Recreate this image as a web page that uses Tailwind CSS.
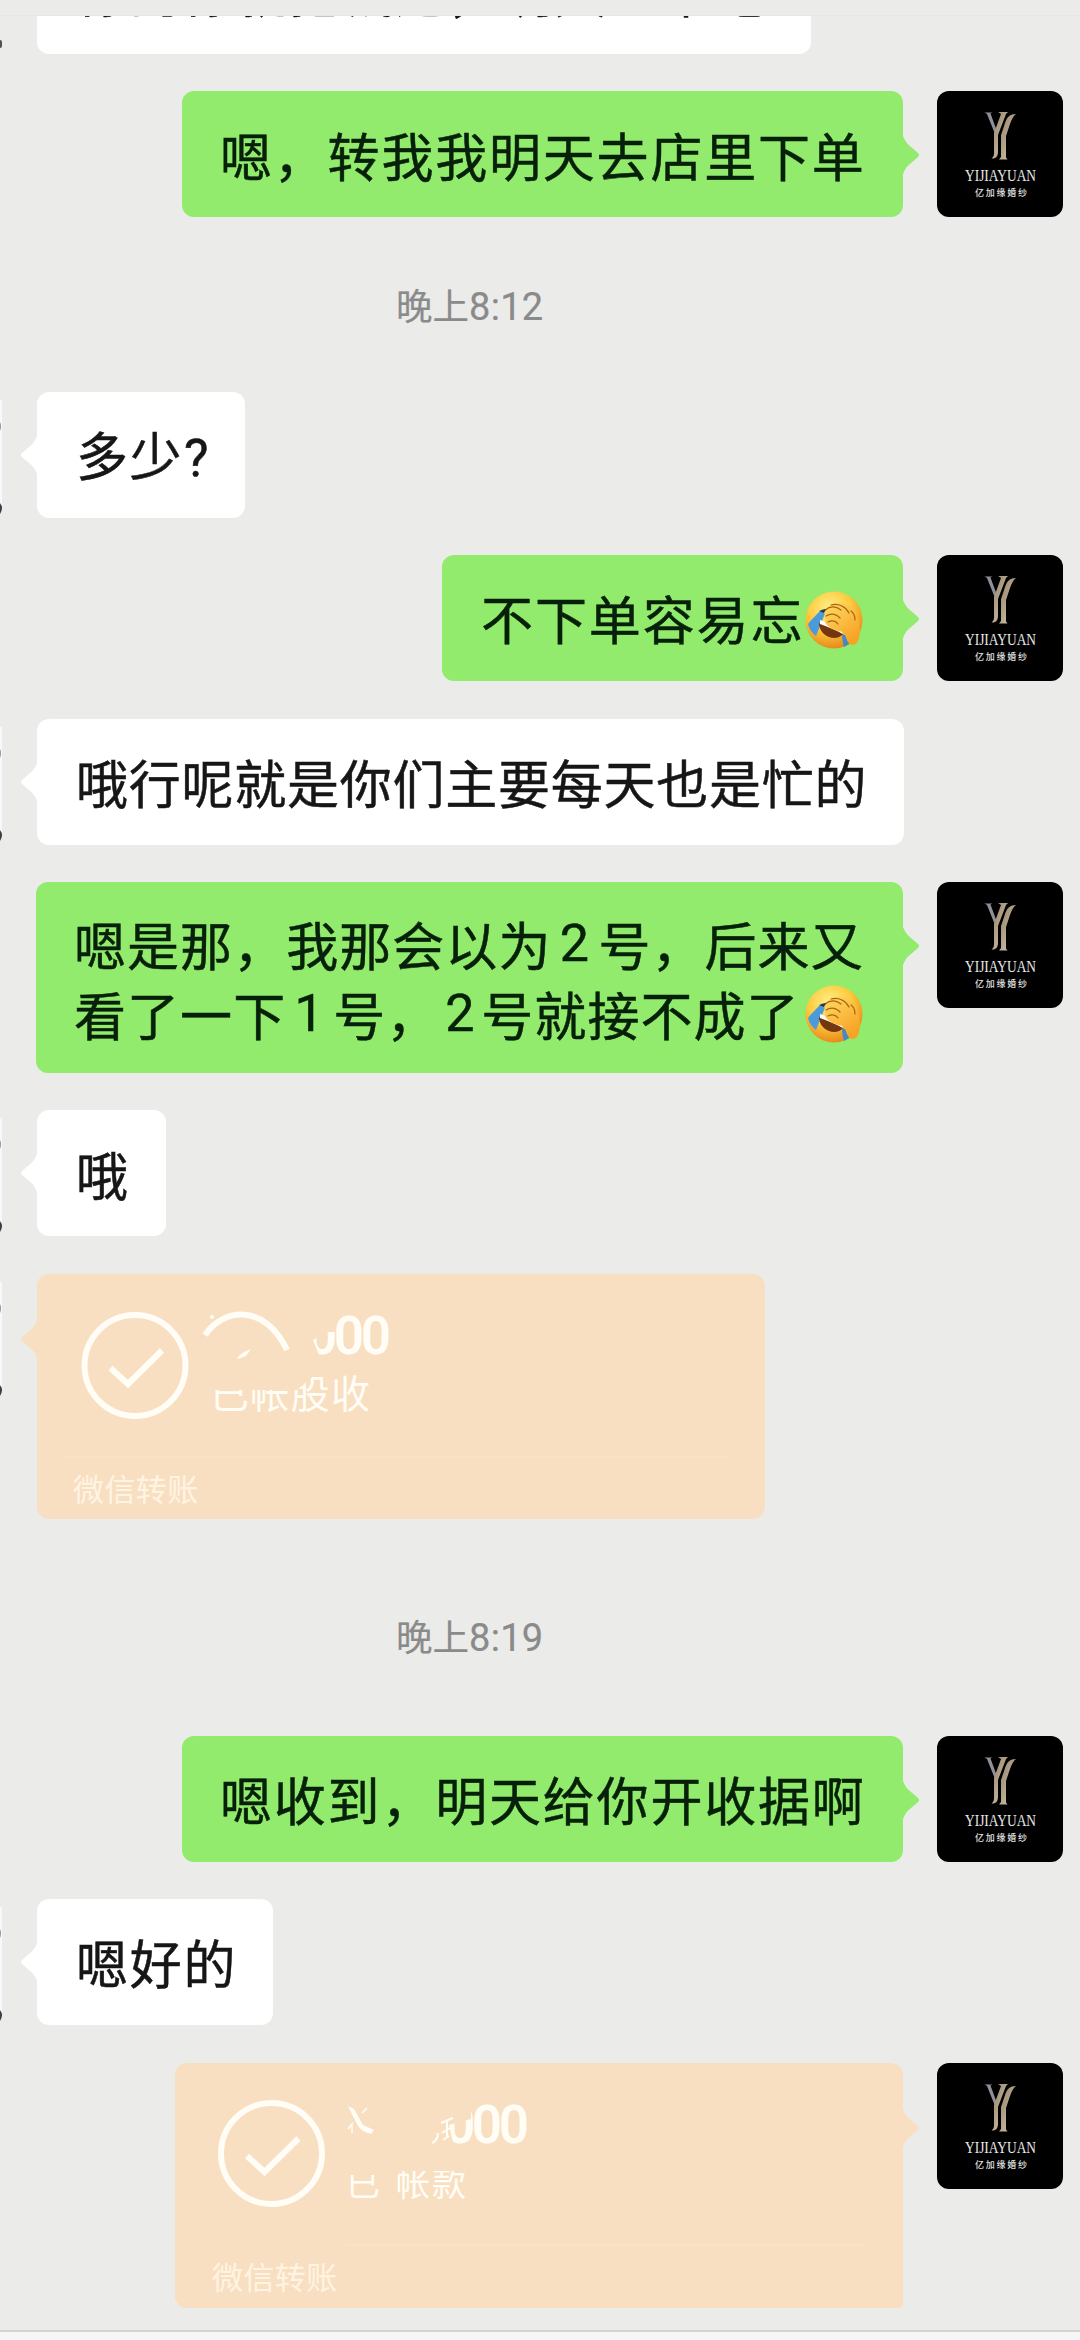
<!DOCTYPE html>
<html lang="zh-CN">
<head>
<meta charset="utf-8">
<title>Chat</title>
<script src="https://cdn.jsdelivr.net/npm/@tailwindcss/browser@4"></script>
</head>
<body class="bg-[#ebebea]">
<svg width="0" height="0" class="absolute">
  <defs>
    <linearGradient id="gold" x1="0" y1="0" x2="1" y2="1"><stop offset="0" stop-color="#8d7f68"/><stop offset=".5" stop-color="#b5a58a"/><stop offset="1" stop-color="#d8ccb6"/></linearGradient>
    <radialGradient id="face" cx=".42" cy=".3" r=".7"><stop offset="0" stop-color="#fff08a"/><stop offset=".55" stop-color="#fdca3c"/><stop offset="1" stop-color="#e98a1c"/></radialGradient>
    <linearGradient id="hand" x1="0" y1="0" x2=".6" y2="1"><stop offset="0" stop-color="#ffdc66"/><stop offset="1" stop-color="#f7a325"/></linearGradient>
  </defs>
  <symbol id="logo" viewBox="0 0 126 126">
    <path d="M47.500 21.500h8l-2 1 7 19-1.500 4L50 23z" fill="#8f9099"/>
    <path d="M61 21h10l-2 2-8 21v17c0 4-2 7-6.500 6.500 2-1.500 2.500-3 2.500-6V42l7-19z" fill="url(#gold)"/>
    <path d="M79 23c-6 0-9 3-11 9l-4 12v22l-2 2.500h8.500l-1.500-2V45l4-12c2-5 3-8 6-10z" fill="url(#gold)"/>
    <text x="28" y="90" textLength="71" lengthAdjust="spacingAndGlyphs" font-family="Liberation Serif, serif" font-size="16.500" fill="#e8e8e8">YIJIAYUAN</text>
    <text x="38" y="105" textLength="52" font-family="Noto Sans CJK SC, sans-serif" font-size="9" font-weight="500" fill="#e0e0e0">亿加缘婚纱</text>
  </symbol>
  <symbol id="facepalm" viewBox="0 0 58 58">
    <circle cx="29" cy="29" r="28.500" fill="url(#face)"/>
    <path d="M16 19c2-1 5-1 5 1L11 45c-4-3-7-7-8-12 3-4 8-9 13-14z" fill="#4a9bdc"/>
    <path d="M37 43l7 3v7l-5 3c-1-4-2-8-2-13z" fill="#4488c8"/>
    <path d="M14 32c7 2 16 5 24 11-3 4-9 5-14 3-6-2-10-8-10-14z" fill="#74360f"/>
    <path d="M15 29l20 7 3 7c-7-4-15-7-23-10z" fill="#fff"/>
    <path d="M19 21c1-4 7-8 13-9 9-2 17 4 20 12 3 10 4 19 1 26-2 5-8 5-10 1-2-3-2-7-5-10-6-1-14-4-17-8-2-3-1-4 1-4-3-2-3-4-1-6-2 0-3-1-2-2z" fill="url(#hand)"/>
    <path d="M20 19c5-4 11-4 16 0M21 25c5-3 10-2 14 2M23 31c4-2 8-1 10 2M26 14c8-2 15 2 18 8M46 20c3 2 4 5 4 9" fill="none" stroke="#a8640f" stroke-width="1.200" stroke-linecap="round"/>
    <path d="M14 20l7-2-2 4z" fill="#333"/>
  </symbol>
  <symbol id="tick" viewBox="0 0 108 108">
    <circle cx="54" cy="54" r="50.500" fill="none" stroke="#fffdf5" stroke-width="6"/>
    <path d="M29.500 56.500L47 72.500 81 39" fill="none" stroke="#fffdf5" stroke-width="6"/>
  </symbol>
  <symbol id="tail" viewBox="0 0 17 38"><path d="M0 0c2 5 4 8 8 11l7 6q2 2 0 4l-7 6c-4 3-6 6-8 11z" fill="currentColor"/></symbol>
  <symbol id="peer" viewBox="0 0 3 126"><path d="M0 8h2v112H0z" fill="#f6f9fc"/><path d="M0 30q2 4 0 9z" fill="#8c9098"/><path d="M0 111q4 5 0 11z" fill="#3c3c46"/></symbol>
</svg>

<main class="w-[1080px] h-[2340px] overflow-hidden flex flex-col text-[52px] leading-[70px] text-[#161616] font-['Noto_Sans_CJK_SC','Noto_Sans_SC',sans-serif] whitespace-nowrap [-webkit-text-stroke:0.5px_currentColor]">

  <header class="h-4 shrink-0 bg-[#ebebea] border-b border-[#e6e6e5]"></header>

  <div class="relative shrink-0 h-[38px] overflow-hidden pl-[37px]">
    <div class="w-[774px] h-[38px] bg-white rounded-b-xl pl-10 overflow-hidden"><div class="-mt-[60px] tracking-[1px]">你的你就把钱这，明天上午吧</div></div>
    <div class="absolute left-0 top-[24px] w-[2px] h-2 bg-[#50505a] rounded-r"></div>
  </div>

  <section class="mt-[37px] shrink-0 flex justify-end pr-[17px]">
    <div class="relative w-[721px] h-[126px] rounded-xl bg-[#92eb6c] text-[#06200a] pl-[38px] pt-[29px] tracking-[1.800px]">嗯，转我我明天去店里下单<svg class="absolute left-full top-[45px] w-[17px] h-[38px] text-[#92eb6c]"><use href="#tail"/></svg></div>
    <div class="ml-[34px] size-[126px] rounded-xl bg-black overflow-hidden"><svg class="size-full"><use href="#logo"/></svg></div>
  </section>

  <time class="mt-[63px] h-[50px] shrink-0 pl-[396px] text-[36.500px] leading-[50px] text-[#8a8a8a] [-webkit-text-stroke:0.200px_currentColor]">晚上<span class="font-[Roboto] text-[38px] tracking-[0.300px]">8:12</span></time>

  <section class="mt-[62px] shrink-0 flex">
    <svg class="w-[3px] h-[126px] mr-[34px]"><use href="#peer"/></svg>
    <div class="relative w-[208px] h-[126px] rounded-xl bg-white pl-[39px] pt-[27px] tracking-[1.500px]">多少<span class="font-[Roboto] ml-px">?</span><svg class="absolute right-full top-[44px] w-[17px] h-[38px] text-white -scale-x-100"><use href="#tail"/></svg></div>
  </section>

  <section class="mt-[37px] shrink-0 flex justify-end pr-[17px]">
    <div class="relative w-[461px] h-[126px] rounded-xl bg-[#92eb6c] text-[#06200a] pl-[39px] pt-[28px] tracking-[1.900px] flex">不下单容易忘<svg class="size-[58px] mt-[8px] ml-px"><use href="#facepalm"/></svg><svg class="absolute left-full top-[45px] w-[17px] h-[38px] text-[#92eb6c]"><use href="#tail"/></svg></div>
    <div class="ml-[34px] size-[126px] rounded-xl bg-black overflow-hidden"><svg class="size-full"><use href="#logo"/></svg></div>
  </section>

  <section class="mt-[38px] shrink-0 flex">
    <svg class="w-[3px] h-[126px] mr-[34px]"><use href="#peer"/></svg>
    <div class="relative w-[867px] h-[126px] rounded-xl bg-white pl-[39px] pt-[28px] tracking-[0.750px]">哦行呢就是你们主要每天也是忙的<svg class="absolute right-full top-[44px] w-[17px] h-[38px] text-white -scale-x-100"><use href="#tail"/></svg></div>
  </section>

  <section class="mt-[37px] shrink-0 flex justify-end pr-[17px]">
    <div class="relative w-[867px] h-[191px] rounded-xl bg-[#92eb6c] text-[#06200a] pl-[38px] pt-[27px] tracking-[1.050px]">
      <p class="flex">嗯是那，我那会以为<span class="w-[47px] text-center font-[Roboto]">2</span>号，后来又</p>
      <p class="flex">看了一下<span class="w-[47px] text-center font-[Roboto]">1</span>号，<span class="w-[42px] text-center font-[Roboto]">2</span>号就接不成了<svg class="size-[58px] mt-[6px] ml-[5px]"><use href="#facepalm"/></svg></p>
      <svg class="absolute left-full top-[45px] w-[17px] h-[38px] text-[#92eb6c]"><use href="#tail"/></svg>
    </div>
    <div class="ml-[34px] size-[126px] rounded-xl bg-black overflow-hidden"><svg class="size-full"><use href="#logo"/></svg></div>
  </section>

  <section class="mt-[37px] shrink-0 flex">
    <svg class="w-[3px] h-[126px] mr-[34px]"><use href="#peer"/></svg>
    <div class="relative w-[129px] h-[126px] rounded-xl bg-white pl-[39px] pt-[29px]">哦<svg class="absolute right-full top-[44px] w-[17px] h-[38px] text-white -scale-x-100"><use href="#tail"/></svg></div>
  </section>

  <section class="mt-[38px] shrink-0 flex [-webkit-text-stroke:0px]">
    <svg class="w-[3px] h-[126px] mr-[34px]"><use href="#peer"/></svg>
    <article class="relative w-[728px] h-[245px] rounded-xl bg-[#f9dfc1] text-[#fffdf5]">
      <svg class="block w-[728px] h-[190px]" viewBox="0 0 728 190" fill="currentColor">
        <clipPath id="sum1"><path d="M276 66l14-8h9V38h80v50h-94z"/></clipPath>
        <clipPath id="note1"><path d="M160 116h100l26-22h60v60H160z"/></clipPath>
        <use href="#tick" x="44" y="37.500" width="108" height="108"/>
        <path d="M168 61c18-27 60-32 82 15" fill="none" stroke="currentColor" stroke-width="6"/>
        <path d="M200 84l5-5 9-4-5 7-8 3z"/><circle cx="175" cy="43" r="2"/>
        <text x="270" y="80" clip-path="url(#sum1)" textLength="84" font-family="Roboto, sans-serif" font-weight="600" font-size="53">000</text>
        <text x="173" y="134" clip-path="url(#note1)" textLength="160" font-family="Noto Sans CJK SC, sans-serif" font-size="39">已帐股收</text>
        <path d="M25 183h665" stroke="#fbe3c6" stroke-width="1.500"/>
      </svg>
      <p class="pl-[36px] -mt-px text-[31px] leading-[50px] tracking-[0.400px] text-[#fff4e3]">微信转账</p>
      <svg class="absolute right-full top-[46px] w-[17px] h-[38px] text-[#f9dfc1] -scale-x-100"><use href="#tail"/></svg>
    </article>
  </section>

  <time class="mt-[92px] h-[50px] shrink-0 pl-[396px] text-[36.500px] leading-[50px] text-[#8a8a8a] [-webkit-text-stroke:0.200px_currentColor]">晚上<span class="font-[Roboto] text-[38px] tracking-[0.300px]">8:19</span></time>

  <section class="mt-[75px] shrink-0 flex justify-end pr-[17px]">
    <div class="relative w-[721px] h-[126px] rounded-xl bg-[#92eb6c] text-[#06200a] pl-[38px] pt-[28px] tracking-[1.800px]">嗯收到，明天给你开收据啊<svg class="absolute left-full top-[45px] w-[17px] h-[38px] text-[#92eb6c]"><use href="#tail"/></svg></div>
    <div class="ml-[34px] size-[126px] rounded-xl bg-black overflow-hidden"><svg class="size-full"><use href="#logo"/></svg></div>
  </section>

  <section class="mt-[37px] shrink-0 flex">
    <svg class="w-[3px] h-[126px] mr-[34px]"><use href="#peer"/></svg>
    <div class="relative w-[236px] h-[126px] rounded-xl bg-white pl-[39px] pt-[28px] tracking-[1.700px]">嗯好的<svg class="absolute right-full top-[44px] w-[17px] h-[38px] text-white -scale-x-100"><use href="#tail"/></svg></div>
  </section>

  <section class="mt-[38px] shrink-0 flex justify-end pr-[17px] [-webkit-text-stroke:0px]">
    <article class="relative w-[728px] h-[245px] rounded-xl rounded-br-sm bg-[#f9dfc1] text-[#fffdf5]">
      <svg class="block w-[728px] h-[190px]" viewBox="0 0 728 190" fill="currentColor">
        <clipPath id="sum2"><path d="M274 62l22-6V38h80v50h-96z"/></clipPath>
        <clipPath id="note2"><path d="M160 112h52v-4h100v50H160z"/></clipPath>
        <use href="#tick" x="42.500" y="36.500" width="108" height="108"/>
        <path d="M173 43l6 3 9 16 11 5-3 4c-9-2-13-7-16-14z"/><path d="M187 50l5-5M173 66l4-5v9" fill="none" stroke="currentColor" stroke-width="1.500"/>
        <path d="M257 80c4-2 6-6 6-10M266 60l12-5M267 70l8-5M272 57v18M268 77l6-4" fill="none" stroke="currentColor" stroke-width="2"/>
        <text x="270" y="80" clip-path="url(#sum2)" textLength="84" font-family="Roboto, sans-serif" font-weight="600" font-size="53">000</text>
        <g clip-path="url(#note2)" font-family="Noto Sans CJK SC, sans-serif" font-size="34"><text x="171" y="133">已</text><text x="221" y="133" textLength="70">帐款</text></g>
        <path d="M170 182h520" stroke="#fbe3c6" stroke-width="1.500"/>
      </svg>
      <p class="pl-[37px] -mt-[2px] text-[31px] leading-[50px] tracking-[0.400px] text-[#fff4e3]">微信转账</p>
      <svg class="absolute left-full top-[46px] w-[17px] h-[38px] text-[#f9dfc1]"><use href="#tail"/></svg>
    </article>
    <div class="ml-[34px] size-[126px] rounded-xl bg-black overflow-hidden"><svg class="size-full"><use href="#logo"/></svg></div>
  </section>

  <footer class="mt-[22px] h-[10px] shrink-0 border-t-2 border-[#d4d4d3] bg-[#f6f6f6]"></footer>
</main>
</body>
</html>
